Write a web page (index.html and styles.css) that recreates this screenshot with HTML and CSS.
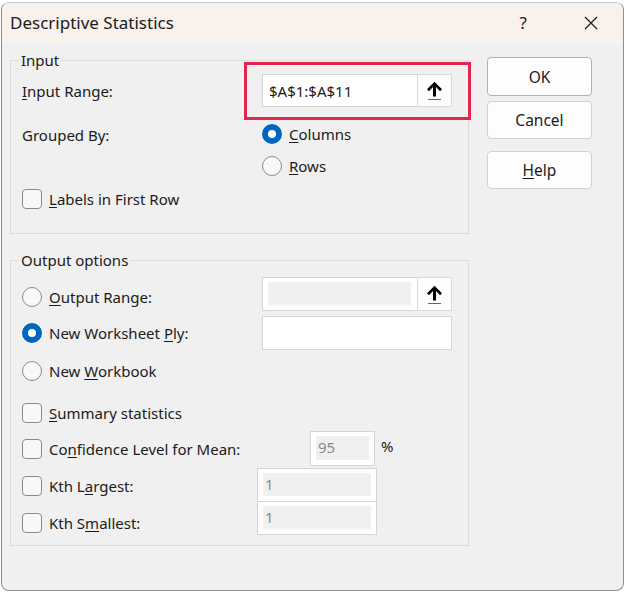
FILE: index.html
```html
<!DOCTYPE html>
<html lang="en">
<head>
  <meta charset="UTF-8">
  <title>Descriptive Statistics</title>
  <meta name="viewport" content="width=device-width, initial-scale=1">
  <link rel="stylesheet" href="styles.css">
</head>
<body>
  <div class="dialog">
    <div class="titlebar">
      <span class="title">Descriptive Statistics</span>
      <span class="help-q">?</span>
      <svg class="close" width="14" height="14" viewBox="0 0 14 14">
        <path d="M1 1 L13 13 M13 1 L1 13" stroke="#1a1a1a" stroke-width="1.2" fill="none"/>
      </svg>
    </div>

    <div class="content">
      <div class="groups">
        <fieldset class="group group-input">
          <legend>Input</legend>

          <div class="row row-range">
            <span class="label"><u>I</u>nput Range:</span>
            <div class="ref-field">
              <span class="ref-text">$A$1:$A$11</span>
              <span class="ref-btn">
                <svg width="17" height="19" viewBox="0 0 17 19"><path d="M8.5 0.8 L1 8.3 L2.9 10.2 L7 6.1 V15.5 H10 V6.1 L14.1 10.2 L16 8.3 Z" fill="#000"/><path d="M2 18.5 H15" stroke="#666" stroke-width="1"/></svg>
              </span>
              <span class="highlight"></span>
            </div>
          </div>

          <div class="row row-grouped">
            <span class="label">Grouped By:</span>
            <div class="options">
              <div class="option"><span class="radio checked"></span><span><u>C</u>olumns</span></div>
              <div class="option"><span class="radio"></span><span><u>R</u>ows</span></div>
            </div>
          </div>

          <div class="option row-labels"><span class="checkbox"></span><span><u>L</u>abels in First Row</span></div>
        </fieldset>

        <fieldset class="group group-output">
          <legend>Output options</legend>

          <div class="row row-out">
            <div class="option label"><span class="radio"></span><span><u>O</u>utput Range:</span></div>
            <div class="ref-field">
              <span class="ref-text disabled"></span>
              <span class="ref-btn">
                <svg width="17" height="19" viewBox="0 0 17 19"><path d="M8.5 0.8 L1 8.3 L2.9 10.2 L7 6.1 V15.5 H10 V6.1 L14.1 10.2 L16 8.3 Z" fill="#000"/><path d="M2 18.5 H15" stroke="#666" stroke-width="1"/></svg>
              </span>
            </div>
          </div>

          <div class="row row-ply">
            <div class="option label"><span class="radio checked"></span><span>New Worksheet <u>P</u>ly:</span></div>
            <div class="text-field"></div>
          </div>

          <div class="option row-book"><span class="radio"></span><span>New <u>W</u>orkbook</span></div>

          <div class="option row-summary"><span class="checkbox"></span><span><u>S</u>ummary statistics</span></div>

          <div class="row row-conf">
            <div class="option"><span class="checkbox"></span><span>Co<u>n</u>fidence Level for Mean:</span></div>
            <div class="num-field conf-field"><span class="num-inner">95</span></div>
            <span class="pct">%</span>
          </div>

          <div class="row row-kth">
            <div class="option kth-label"><span class="checkbox"></span><span>Kth L<u>a</u>rgest:</span></div>
            <div class="num-field kth-field"><span class="num-inner">1</span></div>
          </div>

          <div class="row row-kth row-kth-small">
            <div class="option kth-label"><span class="checkbox"></span><span>Kth S<u>m</u>allest:</span></div>
            <div class="num-field kth-field"><span class="num-inner">1</span></div>
          </div>
        </fieldset>
      </div>

      <div class="buttons">
        <button class="btn btn-default">OK</button>
        <button class="btn">Cancel</button>
        <button class="btn btn-help"><u>H</u>elp</button>
      </div>
    </div>
  </div>
</body>
</html>
```

FILE: styles.css
```css
html, body {
  margin: 0;
  padding: 0;
}
body {
  background: #fff;
  font-family: "Noto Sans", "Open Sans", sans-serif;
  font-size: 15px;
  color: #1b1b1b;
  width: 625px;
  height: 592px;
  overflow: hidden;
}
u {
  text-decoration-thickness: 1px;
  text-underline-offset: 2px;
}

.dialog {
  box-sizing: border-box;
  width: 623px;
  height: 589px;
  margin: 2px 1px 0 1px;
  border: 1px solid #8e8e8e;
  border-top-color: #c8c8c8;
  border-radius: 8px;
  background: #f0f0f0;
  overflow: hidden;
}

.titlebar {
  height: 41px;
  background: #f9f1eb;
  display: flex;
  align-items: center;
  padding-left: 8px;
}
.title {
  font-size: 17px;
  flex: 1;
  margin-top: -2px;
}
.help-q {
  font-size: 17px;
  margin-right: 57px;
  margin-top: -2px;
}
.close {
  margin-right: 25px;
  margin-top: -2px;
}

.content {
  display: flex;
  padding-left: 8px;
  padding-top: 6px;
}
.groups {
  width: 459px;
}
.buttons {
  display: flex;
  flex-direction: column;
  margin-left: 18px;
  padding-top: 7px;
  width: 105px;
}

.group {
  margin: 0;
  padding: 0 0 0 11px;
  border: 1px solid #dcdcdc;
  min-width: 0;
}
.group legend {
  padding: 0 2px;
  margin-left: -3px;
  line-height: 20px;
}
.group-input {
  padding-bottom: 24px;
}
.group-output {
  margin-top: 16px;
  padding-bottom: 10px;
}

.row {
  display: flex;
  align-items: center;
}
.label {
  width: 240px;
  flex: none;
}
.option {
  display: flex;
  align-items: center;
  gap: 7px;
  height: 20px;
}

.radio {
  box-sizing: border-box;
  width: 20px;
  height: 20px;
  border: 1px solid #8a8a8a;
  border-radius: 50%;
  background: #f8f8f8;
  flex: none;
}
.radio.checked {
  border: 6px solid #0067c0;
  background: #fff;
}
.checkbox {
  box-sizing: border-box;
  width: 20px;
  height: 20px;
  border: 1px solid #8a8a8a;
  border-radius: 4px;
  background: #f8f8f8;
  flex: none;
}

/* reference fields */
.ref-field {
  position: relative;
  box-sizing: border-box;
  width: 190px;
  height: 34px;
  display: flex;
  background: #fff;
  border: 1px solid #d5d5d5;
}
.ref-text {
  flex: 1;
  padding-left: 6px;
  line-height: 32px;
}
.ref-text.disabled {
  margin: 4px 6px 5px 5px;
  padding: 0;
  background: #f0f0f0;
}
.ref-btn {
  box-sizing: border-box;
  width: 35px;
  margin: -1px -1px -1px 0;
  border: 1px solid #dadada;
  background: #fdfdfd;
  display: flex;
  align-items: center;
  justify-content: center;
}
.highlight {
  position: absolute;
  top: -13px;
  left: -19px;
  right: -20px;
  bottom: -14px;
  border: 3px solid #e3264f;
  pointer-events: none;
}

.row-range {
  margin-top: 4px;
}
.row-range .ref-field {
  height: 33px;
}
.row-grouped {
  margin-top: 17px;
  align-items: flex-start;
}
.row-grouped .label {
  padding-top: 1px;
}
.row-grouped .options {
  display: flex;
  flex-direction: column;
  gap: 12px;
}
.row-labels {
  margin-top: 13px;
}

.row-out {
  margin-top: 7px;
}
.row-out .option {
  margin-top: 6px;
}
.text-field {
  box-sizing: border-box;
  width: 190px;
  height: 34px;
  background: #fff;
  border: 1px solid #d5d5d5;
}
.row-ply {
  margin-top: 5px;
}
.row-book {
  margin-top: 11px;
}
.row-summary {
  margin-top: 22px;
}

.num-field {
  box-sizing: border-box;
  background: #fff;
  border: 1px solid #d5d5d5;
  padding: 4px 5px 5px 5px;
  display: flex;
}
.num-inner {
  flex: 1;
  background: #f0f0f0;
  color: #8a8a8a;
  padding-left: 2px;
  line-height: 23px;
}
.row-conf {
  margin-top: 8px;
}
.row-conf .option {
  width: 288px;
}
.conf-field {
  width: 65px;
  height: 35px;
}
.pct {
  margin-left: 6px;
  margin-top: -6px;
}
.row-kth {
  margin-top: 2px;
  align-items: flex-start;
}
.row-kth .kth-label {
  margin-top: 8px;
}
.row-kth-small {
  margin-top: -1px;
}
.row-kth-small .kth-label {
  margin-top: 12px;
}
.kth-label {
  width: 235px;
}
.kth-field {
  width: 120px;
  height: 34px;
}

.btn {
  box-sizing: border-box;
  height: 38px;
  width: 105px;
  background: #fdfdfd;
  border: 1px solid #d2d2d2;
  border-radius: 4px;
  font-family: inherit;
  font-size: 15.5px;
  color: #1b1b1b;
  padding: 0;
}
.btn + .btn {
  margin-top: 5px;
}
.btn-default {
  height: 39px;
  border-color: #8fb9e3;
}
.btn-help {
  margin-top: 12px !important;
}
```
